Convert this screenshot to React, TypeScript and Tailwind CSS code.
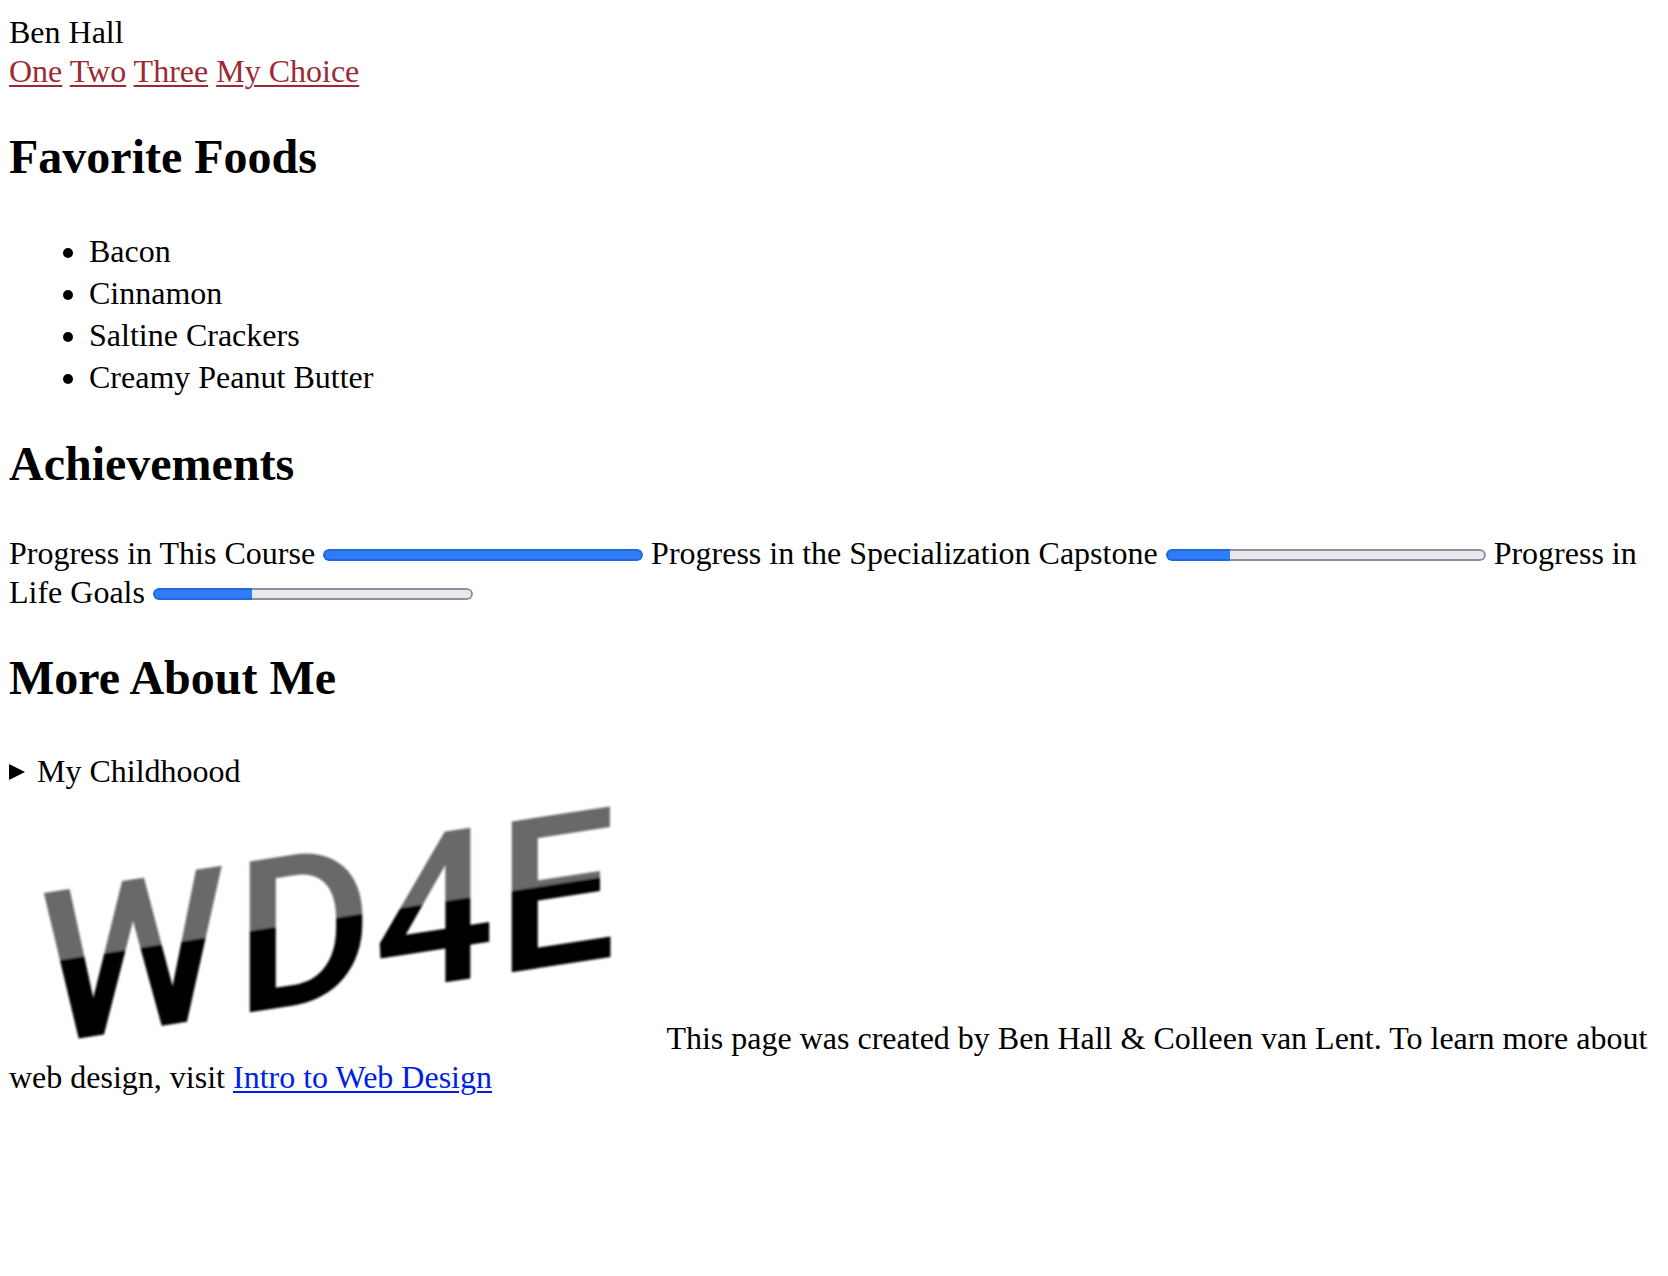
const foods = ["Bacon", "Cinnamon", "Saltine Crackers", "Creamy Peanut Butter"];

const navLinks = [
  { label: "One", href: "#one" },
  { label: "Two", href: "#two" },
  { label: "Three", href: "#three" },
  { label: "My Choice", href: "#choice" },
];

const goals = [
  { id: "course", label: "Progress in This Course", value: 100 },
  { id: "capstone", label: "Progress in the Specialization Capstone", value: 20 },
  { id: "life", label: "Progress in Life Goals", value: 31 },
];

function Heading({ children }: { children: string }) {
  return <h2 className="mt-[38px] text-[48px] leading-[56px] font-bold">{children}</h2>;
}

function Meter({ id, value }: { id: string; value: number }) {
  const end =
    value === 100
      ? "[&::-webkit-progress-value]:rounded-full [&::-webkit-progress-value]:border-2"
      : "[&::-webkit-progress-value]:rounded-l-full [&::-webkit-progress-value]:border-y-2 [&::-webkit-progress-value]:border-l-2";
  return (
    <progress
      id={id}
      max={100}
      value={value}
      className={`mb-[3px] inline-block h-3 w-80 appearance-none overflow-hidden rounded-full align-baseline [&::-webkit-progress-bar]:rounded-full [&::-webkit-progress-bar]:bg-[#e9e9ed] [&::-webkit-progress-bar]:shadow-[inset_0_0_0_2px_#8f8f9d] [&::-webkit-progress-value]:border-[#2068dc] [&::-webkit-progress-value]:bg-[#2f7cf6] ${end}`}
    />
  );
}

function Logo() {
  return (
    <svg
      viewBox="0 0 650 257"
      width="650"
      height="257"
      role="img"
      aria-label="WD4E"
      className="inline-block overflow-visible align-baseline"
    >
      <defs>
        <linearGradient id="tone" gradientUnits="userSpaceOnUse" x1="0" y1="107" x2="0" y2="257">
          <stop offset="0.455" stopColor="#696969" />
          <stop offset="0.465" stopColor="#000000" />
        </linearGradient>
        <filter id="soft">
          <feGaussianBlur stdDeviation="0.8" />
        </filter>
      </defs>
      <g filter="url(#soft)">
        <text
          x="30"
          y="257"
          dx="0 9 1 2"
          transform="skewY(-8.7)"
          fill="url(#tone)"
          className="font-['Roboto',sans-serif] text-[212px] font-medium"
        >
          WD4E
        </text>
      </g>
    </svg>
  );
}

export default function App() {
  return (
    <div className="bg-white px-[9px] pt-[13px] pb-8 font-['Liberation_Serif',serif] text-[32px] leading-[39px] text-black">
      <header>
        Ben Hall
        <nav>
          {navLinks.map((link) => (
            <span key={link.href}>
              <a
                href={link.href}
                className="text-[#9b2a35] underline decoration-2 underline-offset-[3px]"
              >
                {link.label}
              </a>{" "}
            </span>
          ))}
        </nav>
      </header>

      <main>
        <section>
          <Heading>Favorite Foods</Heading>
          <ul className="mt-[45px] list-disc pl-20 leading-[42px]">
            {foods.map((food) => (
              <li key={food}>{food}</li>
            ))}
          </ul>
        </section>

        <section>
          <Heading>Achievements</Heading>
          <div className="mt-[42px]">
            {goals.map((goal) => (
              <span key={goal.id}>
                <label htmlFor={goal.id}>{goal.label}</label>{" "}
                <Meter id={goal.id} value={goal.value} />{" "}
              </span>
            ))}
          </div>
        </section>

        <section>
          <Heading>More About Me</Heading>
          <details className="group mt-11 leading-[42px]">
            <summary className="list-none">
              <svg
                viewBox="0 0 16 16"
                aria-hidden="true"
                className="mr-3 mb-0.5 inline-block size-4 align-baseline group-open:rotate-90"
              >
                <path d="M0 0 16 8 0 16z" />
              </svg>
              My Childhoood
            </summary>
          </details>
        </section>
      </main>

      <footer>
        <Logo /> This page was created by Ben Hall &amp; Colleen van Lent. To learn more about web
        design, visit{" "}
        <a
          href="#intro"
          className="text-[#001ee6] underline decoration-2 underline-offset-[3px]"
        >
          Intro to Web Design
        </a>
      </footer>
    </div>
  );
}
